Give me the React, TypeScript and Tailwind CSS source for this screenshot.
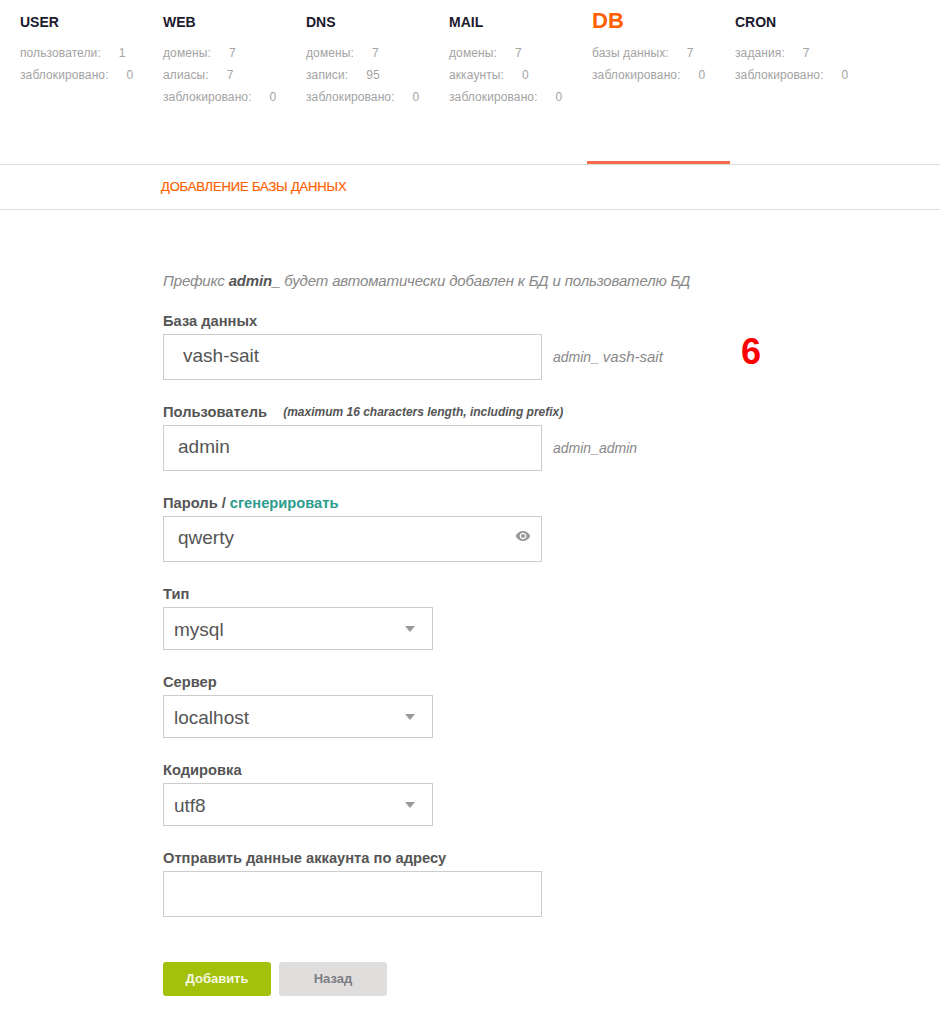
import React from 'react';
import { MdVisibility } from 'react-icons/md';

const tabs = [
  { name: 'USER', stats: [['пользователи:', '1'], ['заблокировано:', '0']] },
  { name: 'WEB', stats: [['домены:', '7'], ['алиасы:', '7'], ['заблокировано:', '0']] },
  { name: 'DNS', stats: [['домены:', '7'], ['записи:', '95'], ['заблокировано:', '0']] },
  { name: 'MAIL', stats: [['домены:', '7'], ['аккаунты:', '0'], ['заблокировано:', '0']] },
  { name: 'DB', active: true, stats: [['базы данных:', '7'], ['заблокировано:', '0']] },
  { name: 'CRON', stats: [['задания:', '7'], ['заблокировано:', '0']] },
];

function Tab({ name, stats, active }: { name: string; stats: string[][]; active?: boolean }) {
  return (
    <div className={`w-[143px] h-[164px] pl-[5px] pt-[9px] border-b-[3px] ${active ? 'border-[#f56b4b]' : 'border-transparent'}`}>
      <div className={`h-[27px] flex items-center font-bold ${active ? 'text-[22px] pb-[4px] text-[#ff6000]' : 'text-[14px] text-[#1c1a2e]'}`}>{name}</div>
      <div className="mt-[6px]">
        {stats.map(([label, value]) => (
          <div key={label} className="h-[22px] flex items-center text-[12px] tracking-[0.1px] text-[#a3a3a3] whitespace-nowrap">
            <span>{label}</span>
            <span className="ml-[18px]">{value}</span>
          </div>
        ))}
      </div>
    </div>
  );
}

function Label({ children, className = '' }: { children: React.ReactNode; className?: string }) {
  return <div className={`h-[16px] flex items-center text-[14.7px] font-bold text-[#555] ${className}`}>{children}</div>;
}

function TextField({ value, pad = 'pl-[14px]' }: { value: string; pad?: string }) {
  return (
    <input
      readOnly
      value={value}
      className={`w-[379px] h-[46px] border border-[#ccc] bg-white ${pad} pb-[2px] text-[19px] text-[#555] outline-none`}
    />
  );
}

function SelectField({ value }: { value: string }) {
  return (
    <div className="mt-[5px] w-[270px] h-[43px] border border-[#ccc] flex items-center justify-between pl-[10px] pr-[17px] text-[19px] text-[#555]">
      <span className="pt-[3px]">{value}</span>
      <svg width="10" height="6" viewBox="0 0 10 6"><path d="M0 0h10L5 6z" fill="#999" /></svg>
    </div>
  );
}

export default function App() {
  return (
    <div className="w-[940px] h-[1014px] bg-white font-['Liberation_Sans',Arial,sans-serif] overflow-hidden">
      {/* Tabs */}
      <div className="flex pl-[15px] border-b border-[#ddd] h-[165px]">
        {tabs.map((t) => (
          <Tab key={t.name} name={t.name} stats={t.stats} active={t.active} />
        ))}
      </div>

      {/* Sub header */}
      <div className="h-[45px] border-b border-[#ddd] pl-[161px] flex items-center text-[13px] tracking-[-0.15px] text-[#ff6000] uppercase [-webkit-text-stroke:0.2px_#ff6000]">
        Добавление базы данных
      </div>

      {/* Form */}
      <div className="pl-[163px] pt-[62px]">
        <div className="h-[18px] flex items-center text-[15px] tracking-[-0.15px] italic text-[#888] whitespace-pre">
          Префикс <b className="text-[#555]">admin_</b> будет автоматически добавлен к БД и пользователю БД
        </div>

        <Label className="mt-[23px]">База данных</Label>
        <div className="mt-[5px] flex items-center">
          <TextField value="vash-sait" pad="pl-[19px]" />
          <span className="ml-[11px] w-[188px] text-[14px] italic text-[#888]">
            admin_ <span className="text-[15px]">vash-sait</span>
          </span>
          <span className="mb-[10px] text-[36px] leading-none font-bold text-[#fe0000]">6</span>
        </div>

        <Label className="mt-[24px]">
          Пользователь
          <span className="ml-[16px] text-[12px] italic">(maximum 16 characters length, including prefix)</span>
        </Label>
        <div className="mt-[5px] flex items-center">
          <TextField value="admin" />
          <span className="ml-[11px] text-[14px] italic text-[#888]">admin_admin</span>
        </div>

        <Label className="mt-[24px]">
          Пароль /<span className="ml-[4px] text-[#2c9c8e]">сгенерировать</span>
        </Label>
        <div className="mt-[5px] relative w-[379px]">
          <TextField value="qwerty" />
          <MdVisibility className="absolute right-[11px] top-[12px] text-[#999]" size={16} />
        </div>

        <Label className="mt-[24px]">Тип</Label>
        <SelectField value="mysql" />

        <Label className="mt-[24px]">Сервер</Label>
        <SelectField value="localhost" />

        <Label className="mt-[24px]">Кодировка</Label>
        <SelectField value="utf8" />

        <Label className="mt-[24px]">Отправить данные аккаунта по адресу</Label>
        <div className="mt-[5px]">
          <TextField value="" />
        </div>

        <div className="mt-[45px] flex gap-[8px]">
          <button className="w-[108px] h-[34px] rounded-[3px] bg-[#a3c00a] text-[13px] font-bold text-[#f5f9e0]">Добавить</button>
          <button className="w-[108px] h-[34px] rounded-[3px] bg-[#dfdedd] text-[13px] font-bold text-[#7d7d85]">Назад</button>
        </div>
      </div>
    </div>
  );
}
